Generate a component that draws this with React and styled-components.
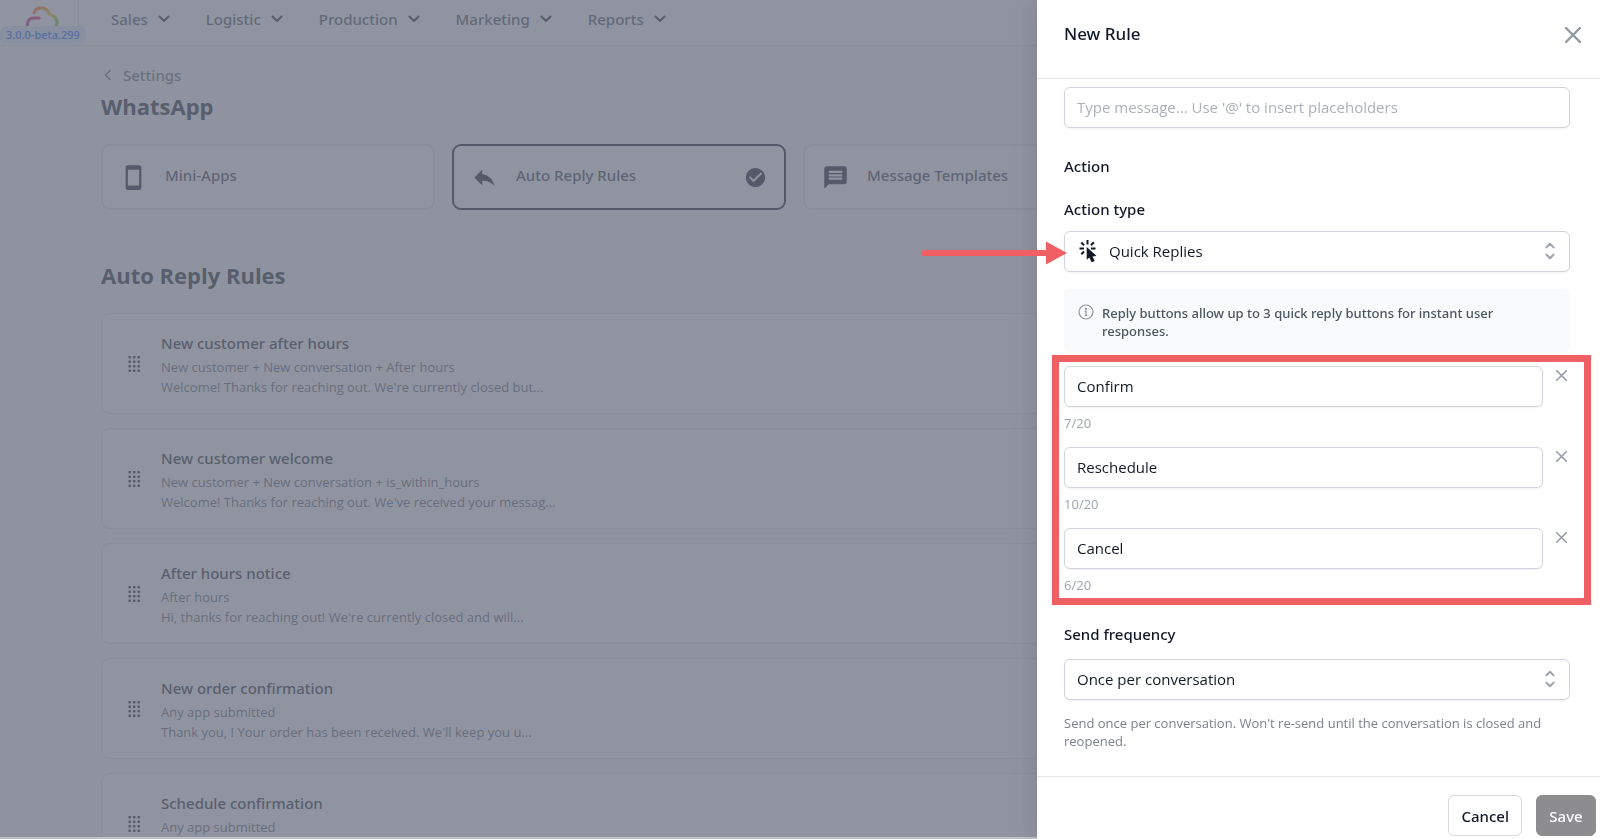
import React, { useState } from "react";
import styled, { createGlobalStyle, css } from "styled-components";
import { MdReply, MdMessage, MdStayCurrentPortrait, MdCheckCircle } from "react-icons/md";

const body = '"Open Sans", "Noto Sans", sans-serif';
const medium = '"Noto Sans", "Open Sans", sans-serif';

const GlobalStyle = createGlobalStyle`
  *, *::before, *::after { box-sizing: border-box; }
  body { margin: 0; font-family: ${body}; color: #111827; background: #f9fafb; }
  button, input, select { font: inherit; color: inherit; }
  h1, h2, h3, p, ul { margin: 0; padding: 0; }
  ul { list-style: none; }
`;

const mediumText = css`
  font-family: ${medium};
  font-weight: 500;
`;

const Shell = styled.div`
  height: 100vh;
  overflow: hidden;
`;

/* ---------- Top bar ---------- */
const TopBar = styled.header`
  display: flex;
  height: 46px;
  background: #fff;
  border-bottom: 1px solid #dfe2e7;
`;

const Brand = styled.div`
  position: relative;
  width: 79px;
  padding: 5px 0 0 24px;
  border-right: 1px solid #e5e7eb;
`;

const Version = styled.span`
  ${mediumText}
  position: absolute;
  top: 26px;
  left: 0;
  padding: 0 6px;
  font-size: 11px;
  line-height: 18px;
  white-space: nowrap;
  color: #2563ff;
  background: #dbeafe;
  border-radius: 6px;
`;

const Nav = styled.nav`
  display: flex;
  gap: 36px;
  padding: 7px 32px;
`;

const NavItem = styled.button`
  ${mediumText}
  display: flex;
  align-items: center;
  gap: 10px;
  height: 24px;
  padding: 0;
  border: 0;
  background: none;
  font-size: 15px;
  color: #4b5563;
`;

/* ---------- Page ---------- */
const Page = styled.main`
  padding: 18px 112px 0 101px;
`;

const BackLink = styled.a`
  ${mediumText}
  display: flex;
  align-items: center;
  gap: 12px;
  padding-left: 3px;
  font-size: 15px;
  line-height: 22px;
  color: #6b7280;
  text-decoration: none;
`;

const Title = styled.h1`
  font-size: 22px;
  font-weight: 700;
  line-height: 28px;
  color: #1f2937;
  margin-top: ${(p) => p.$top}px;
`;

const Tabs = styled.div`
  display: grid;
  grid-template-columns: repeat(4, 1fr);
  gap: 17px;
  margin-top: 24px;
`;

const Tab = styled.button`
  ${mediumText}
  display: flex;
  align-items: center;
  gap: 18px;
  height: 66px;
  padding: 0 17px;
  border-radius: 9px;
  border: 2px solid ${(p) => (p.$active ? "#111827" : "#e0e5ea")};
  background: #fff;
  color: #374151;
  font-size: 15px;
  text-align: left;
  white-space: nowrap;

  > svg { color: #111827; }
`;

const TabLabel = styled.span`
  flex: 1;
  padding-bottom: 4px;
`;

const RuleList = styled.ul`
  display: grid;
  gap: 14px;
  margin-top: 24px;
`;

const RuleCard = styled.li`
  display: flex;
  align-items: center;
  gap: 20px;
  height: 101px;
  padding: 0 26px;
  background: #fff;
  border: 1px solid #dfe2e8;
  border-radius: 9px;
`;

const RuleName = styled.h3`
  ${mediumText}
  margin-bottom: 2px;
  font-size: 15px;
  line-height: 24px;
  color: #1f2937;
`;

const RuleLine = styled.p`
  font-size: 13px;
  line-height: 20px;
  color: #5f6673;
`;

/* ---------- Drawer ---------- */
const Backdrop = styled.div`
  position: fixed;
  inset: 0;
  background: rgba(107, 112, 128, 0.75);
  border-bottom: 2px solid #bdc0c8;
`;

const Drawer = styled.aside`
  position: fixed;
  top: 0;
  right: 0;
  bottom: 0;
  width: 563px;
  max-width: 100%;
  display: flex;
  flex-direction: column;
  background: #fff;
  box-shadow: 0 0 24px rgba(17, 24, 39, 0.14);
`;

const DrawerHeader = styled.div`
  display: flex;
  justify-content: space-between;
  padding: 22px 18px 30px 27px;
  border-bottom: 1px solid #e2e4e8;
`;

const DrawerTitle = styled.h2`
  ${mediumText}
  font-size: 17px;
  line-height: 24px;
`;

const IconButton = styled.button`
  display: flex;
  justify-content: center;
  align-items: center;
  width: ${(p) => p.$w}px;
  height: ${(p) => p.$h}px;
  padding: 0;
  border: 0;
  background: none;
  color: #9298a5;
`;

const DrawerBody = styled.div`
  flex: 1;
  min-height: 0;
  display: flex;
  flex-direction: column;
  padding: 8px 30px 0 27px;
`;

const control = css`
  width: 100%;
  height: 41px;
  padding: 0 12px 2px;
  font-size: 15px;
  color: #111827;
  background: #fff;
  border: 1px solid #d1d5db;
  border-radius: 6px;
  box-shadow: 0 1px 2px rgba(0, 0, 0, 0.06);
  outline: none;
`;

const TextInput = styled.input`
  ${control}
  &::placeholder { color: #abb0b9; opacity: 1; }
`;

const SectionTitle = styled.h3`
  ${mediumText}
  margin-top: 27px;
  font-size: 15px;
  line-height: 22px;
`;

const Label = styled.label`
  ${mediumText}
  font-size: 15px;
  line-height: 22px;
  margin: ${(p) => p.$top}px 0 ${(p) => p.$bottom}px;
`;

const SelectWrap = styled.div`
  position: relative;
`;

const Select = styled.select`
  ${control}
  display: block;
  appearance: none;
  padding-left: ${(p) => (p.$icon ? 44 : 12)}px;
`;

const SelectIcon = styled.span`
  position: absolute;
  top: 8px;
  left: 15px;
  display: flex;
  pointer-events: none;
`;

const SelectArrows = styled.span`
  position: absolute;
  top: 8px;
  right: 8px;
  display: flex;
  pointer-events: none;
`;

const Arrow = styled.svg`
  position: absolute;
  top: 10px;
  right: calc(100% - 3px);
  width: 146px;
  height: 24px;
  pointer-events: none;
`;

const Notice = styled.div`
  ${mediumText}
  display: flex;
  gap: 8px;
  margin-top: 17px;
  padding: 15px 14px 12px;
  font-size: 13px;
  line-height: 18px;
  color: #4b5563;
  background: #f9fafb;
  border-radius: 6px;

  > svg { flex: none; }
`;

const Replies = styled.div`
  position: relative;
  display: grid;
  gap: 15px;
  margin-top: 14px;
`;

const Highlight = styled.div`
  position: absolute;
  inset: -11px -21px -11px -12px;
  border: 7px solid #ef5f63;
  pointer-events: none;
`;

const ReplyRow = styled.div`
  display: flex;
  gap: 10px;
`;

const ReplyField = styled.div`
  flex: 1;
`;

const Counter = styled.p`
  margin-top: 7px;
  font-size: 13px;
  line-height: 18px;
  color: #9ca3af;
`;

const Help = styled.p`
  margin-top: 14px;
  font-size: 13px;
  line-height: 18px;
  color: #7b818d;
`;

const DrawerFooter = styled.div`
  display: flex;
  justify-content: flex-end;
  gap: 14px;
  padding: 18px 4px 3px;
  border-top: 1px solid #e2e4e8;
`;

const Button = styled.button`
  ${mediumText}
  min-width: 60px;
  height: 41px;
  padding: 0 12px;
  font-size: 15px;
  border-radius: 6px;
  border: 1px solid ${(p) => (p.$primary ? "#8d8d8f" : "#d6d9de")};
  background: ${(p) => (p.$primary ? "#8d8d8f" : "#fff")};
  color: ${(p) => (p.$primary ? "#fff" : "#111827")};
`;

/* ---------- Drawings ---------- */
const Logo = () => (
  <svg width="36" height="26" viewBox="0 0 36 26" fill="none" strokeWidth="3.2" strokeLinecap="round" aria-hidden="true">
    <defs>
      <linearGradient id="cloudTop" x1="10" y1="4" x2="33" y2="22" gradientUnits="userSpaceOnUse">
        <stop stopColor="#ff6a3c" />
        <stop offset="0.55" stopColor="#f2c521" />
        <stop offset="1" stopColor="#5fd03a" />
      </linearGradient>
      <linearGradient id="cloudLeft" x1="15" y1="14" x2="3" y2="25" gradientUnits="userSpaceOnUse">
        <stop stopColor="#f0224f" />
        <stop offset="1" stopColor="#9a3fd6" />
      </linearGradient>
    </defs>
    <path d="M10 7.500C13 1 23 1 25.500 9.500C32 10.500 35.500 17 31 24" stroke="url(#cloudTop)" />
    <path d="M15 13H10C4 13 2.500 18 3.500 24" stroke="url(#cloudLeft)" />
  </svg>
);

const ChevronDown = () => (
  <svg width="12" height="8" viewBox="0 0 12 8" fill="none" stroke="#1f2937" strokeWidth="2" strokeLinecap="round" strokeLinejoin="round" aria-hidden="true">
    <path d="M1.500 1.500L6 6L10.500 1.500" />
  </svg>
);

const ChevronLeft = () => (
  <svg width="7" height="12" viewBox="0 0 7 12" fill="none" stroke="#6b7280" strokeWidth="1.600" strokeLinecap="round" strokeLinejoin="round" aria-hidden="true">
    <path d="M6 1.500L1.500 6L6 10.500" />
  </svg>
);

const Cross = ({ size, stroke }) => (
  <svg width={size} height={size} viewBox="0 0 16 16" fill="none" stroke="currentColor" strokeWidth={stroke} strokeLinecap="round" aria-hidden="true">
    <path d="M1 1L15 15M15 1L1 15" />
  </svg>
);

const UpDown = () => (
  <svg width="24" height="24" viewBox="0 0 20 20" fill="none" stroke="#9ca3af" strokeWidth="1.700" strokeLinecap="round" strokeLinejoin="round" aria-hidden="true">
    <path d="M7 7l3-3 3 3m0 6l-3 3-3-3" />
  </svg>
);

const ClickIcon = () => (
  <svg width="19" height="24" viewBox="0 0 19 24" aria-hidden="true">
    <path d="M8.500 1V5.500M0.500 9.500H5M12 9.500H16.500M2.300 3.300L5 6.300M12 6.300L14.800 3.300M2.300 15.300L5 12.500" stroke="#111827" strokeWidth="2" fill="none" />
    <path d="M7.700 8V20.800L10.300 18.500L12.600 23.300L15.700 21.900L13.500 17.400L17.500 16.900Z" fill="#111827" />
  </svg>
);

const InfoIcon = () => (
  <svg width="16" height="16" viewBox="0 0 16 16" fill="none" stroke="#8f959f" strokeWidth="1.200" aria-hidden="true">
    <circle cx="8" cy="8" r="7" />
    <path d="M6.800 7.200H8V11.500M6.800 11.500H9.300" />
    <circle cx="8" cy="4.800" r="0.500" fill="#8f959f" />
  </svg>
);

const DragDots = () => (
  <svg width="13" height="18" viewBox="0 0 13 18" fill="#111827" aria-hidden="true">
    {[0, 1, 2, 3].map((r) =>
      [0, 1, 2].map((c) => <rect key={`${r}-${c}`} x={c * 4.5 + 0.5} y={r * 4.5 + 1} width="2.400" height="2.400" rx="0.600" />)
    )}
  </svg>
);

/* ---------- Data ---------- */
const menus = ["Sales", "Logistic", "Production", "Marketing", "Reports"];

const rules = [
  ["New customer after hours", "New customer + New conversation + After hours", "Welcome! Thanks for reaching out. We're currently closed but..."],
  ["New customer welcome", "New customer + New conversation + is_within_hours", "Welcome! Thanks for reaching out. We've received your messag..."],
  ["After hours notice", "After hours", "Hi, thanks for reaching out! We're currently closed and will..."],
  ["New order confirmation", "Any app submitted", "Thank you, ! Your order has been received. We'll keep you u..."],
  ["Schedule confirmation", "Any app submitted", ""],
];

export default function App() {
  const [replies, setReplies] = useState(["Confirm", "Reschedule", "Cancel"]);
  const [message, setMessage] = useState("");

  const editReply = (index, value) => setReplies(replies.map((r, i) => (i === index ? value : r)));
  const removeReply = (index) => setReplies(replies.filter((_, i) => i !== index));

  return (
    <>
      <GlobalStyle />
      <Shell>
        <TopBar>
          <Brand>
            <Logo />
            <Version>3.0.0-beta.299</Version>
          </Brand>
          <Nav>
            {menus.map((m) => (
              <NavItem key={m} type="button">
                {m}
                <ChevronDown />
              </NavItem>
            ))}
          </Nav>
        </TopBar>
        <Page>
          <BackLink href="#settings">
            <ChevronLeft />
            Settings
          </BackLink>
          <Title $top={6}>WhatsApp</Title>
          <Tabs>
            <Tab type="button">
              <MdStayCurrentPortrait size={27} />
              <TabLabel>Mini-Apps</TabLabel>
            </Tab>
            <Tab type="button" $active>
              <MdReply size={27} />
              <TabLabel>Auto Reply Rules</TabLabel>
              <MdCheckCircle size={23} />
            </Tab>
            <Tab type="button">
              <MdMessage size={27} />
              <TabLabel>Message Templates</TabLabel>
            </Tab>
          </Tabs>
          <Title as="h2" $top={51}>Auto Reply Rules</Title>
          <RuleList>
            {rules.map(([name, when, text]) => (
              <RuleCard key={name}>
                <DragDots />
                <div>
                  <RuleName>{name}</RuleName>
                  <RuleLine>{when}</RuleLine>
                  <RuleLine>{text || "\u00a0"}</RuleLine>
                </div>
              </RuleCard>
            ))}
          </RuleList>
        </Page>
      </Shell>

      <Backdrop />

      <Drawer role="dialog" aria-labelledby="drawer-title">
        <DrawerHeader>
          <DrawerTitle id="drawer-title">New Rule</DrawerTitle>
          <IconButton type="button" aria-label="Close" $w={18} $h={26}>
            <Cross size={16} stroke={2.4} />
          </IconButton>
        </DrawerHeader>
        <DrawerBody>
          <TextInput
            aria-label="Message"
            placeholder="Type message... Use '@' to insert placeholders"
            value={message}
            onChange={(e) => setMessage(e.target.value)}
          />
          <SectionTitle>Action</SectionTitle>
          <Label htmlFor="action-type" $top={21} $bottom={11}>Action type</Label>
          <SelectWrap>
            <Select id="action-type" $icon>
              <option>Quick Replies</option>
            </Select>
            <SelectIcon><ClickIcon /></SelectIcon>
            <SelectArrows><UpDown /></SelectArrows>
            <Arrow viewBox="0 0 146 24" aria-hidden="true">
              <path d="M3 12H126" stroke="#ef5f63" strokeWidth="6" strokeLinecap="round" />
              <path d="M125 0.500L146 12L125 23.500Z" fill="#ef5f63" />
            </Arrow>
          </SelectWrap>
          <Notice>
            <InfoIcon />
            <span>Reply buttons allow up to 3 quick reply buttons for instant user responses.</span>
          </Notice>
          <Replies>
            {replies.map((reply, i) => (
              <ReplyRow key={i}>
                <ReplyField>
                  <TextInput
                    aria-label={`Quick reply ${i + 1}`}
                    maxLength={20}
                    value={reply}
                    onChange={(e) => editReply(i, e.target.value)}
                  />
                  <Counter>{reply.length}/20</Counter>
                </ReplyField>
                <IconButton type="button" aria-label="Remove reply" $w={17} $h={18} onClick={() => removeReply(i)}>
                  <Cross size={11} stroke={2.2} />
                </IconButton>
              </ReplyRow>
            ))}
            <Highlight />
          </Replies>
          <Label htmlFor="frequency" $top={29} $bottom={14}>Send frequency</Label>
          <SelectWrap>
            <Select id="frequency">
              <option>Once per conversation</option>
            </Select>
            <SelectArrows><UpDown /></SelectArrows>
          </SelectWrap>
          <Help>Send once per conversation. Won't re-send until the conversation is closed and reopened.</Help>
        </DrawerBody>
        <DrawerFooter>
          <Button type="button">Cancel</Button>
          <Button type="button" $primary>Save</Button>
        </DrawerFooter>
      </Drawer>
    </>
  );
}
